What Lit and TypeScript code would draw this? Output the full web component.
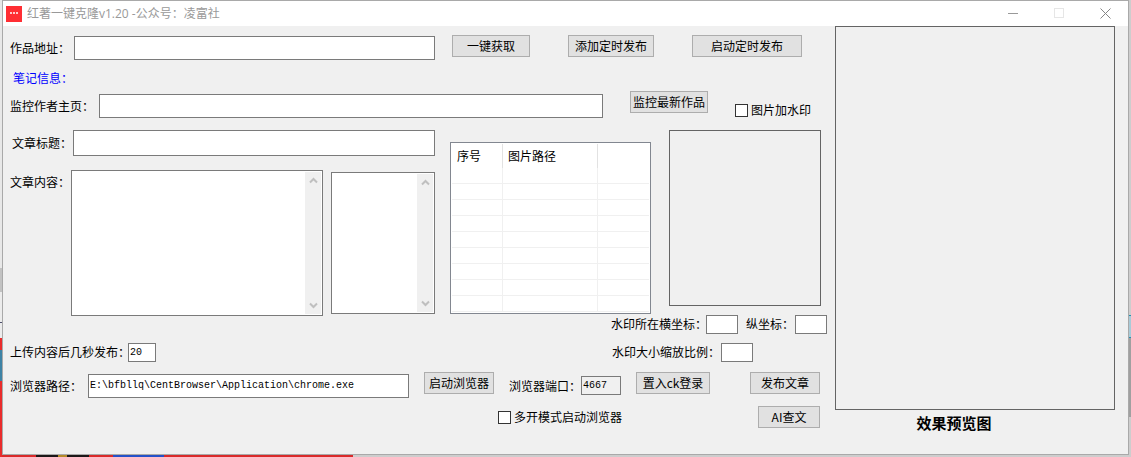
import { LitElement, html, css } from "lit";
import { customElement, property, state } from "lit/decorators.js";

@customElement("scroll-text")
class ScrollText extends LitElement {
  @property() label = "";

  static styles = css`
    :host { display: flex; box-sizing: border-box; border: 1px solid #7a7a7a; background: #fff; padding: 1px; min-width: 0; }
    textarea { flex: 1; min-width: 0; border: 0; margin: 0; padding: 2px; resize: none; outline: none; background: #fff;
      font: 12px "Liberation Mono", "Noto Sans CJK SC", monospace; overflow: hidden; }
    .track { width: 16px; flex: none; background: #f0f0f0; display: flex; flex-direction: column; justify-content: space-between; align-items: center; }
    button { border: 0; padding: 0; margin: 0; background: none; width: 16px; height: 17px; display: flex; align-items: center; justify-content: center; }
    path { fill: none; stroke: #bfbfbf; stroke-width: 2; }
  `;

  render() {
    return html`
      <textarea aria-label=${this.label}></textarea>
      <div class="track">
        <button aria-label="向上滚动"><svg width="9" height="7" viewBox="0 0 9 7"><path d="M1 5.5 4.5 2 8 5.5" /></svg></button>
        <button aria-label="向下滚动"><svg width="9" height="7" viewBox="0 0 9 7"><path d="M1 1.5 4.5 5 8 1.5" /></svg></button>
      </div>
    `;
  }
}

@customElement("app-root")
class AppRoot extends LitElement {
  @state() private rows = Array.from({ length: 9 }, () => ["", "", ""]);

  static styles = css`
    :host {
      display: block;
      box-sizing: border-box;
      min-height: 100vh;
      padding: 0 2px 2px;
      font: 12px/16px "Noto Sans CJK SC", sans-serif;
      color: #000;
      background:
        linear-gradient(#e8e8e8 0 268px, #c2c2c2 268px 292px, #ececec 292px 322px, #4d4f6b 322px 323px, #ececec 323px 338px, #e92c2c 338px 350px, #3e83a5 350px 381px, #e92c2c 381px) left top / 2px 100% no-repeat,
        linear-gradient(#cdcdcd 0 315px, #2b8fae 315px 316px, #a9cbd8 316px 337px, #2b8fae 337px 338px, #a0a0a0 338px 417px, #cdcdcd 417px) right top / 2px 100% no-repeat,
        linear-gradient(90deg, #d92a2a 0 36px, #1c1718 36px 58px, #b58a2a 58px 67px, #1c1718 67px 89px, #d92a2a 89px 113px, #2451c8 113px 164px, #d92a2a 164px 353px, #cdcdcd 353px) left bottom / 100% 2px no-repeat,
        #cdcdcd;
    }
    .window { border: 1px solid #a9a9a9; background: #f0f0f0; }

    .titlebar { display: flex; align-items: center; height: 25px; background: #fff; padding-left: 3px; color: #999; }
    .titlebar h1 { flex: 1; margin: 0 0 0 5px; font: 12px/16px "Open Sans", "Noto Sans CJK SC", sans-serif; white-space: nowrap; }
    .logo { flex: none; display: block; }
    .caption-btn { width: 46px; height: 25px; border: 0; padding: 0; background: none; display: flex; align-items: center; justify-content: center; }

    .body { display: flex; align-items: flex-start; }
    .form { flex: 1; min-width: 0; padding: 9px 8px 26px 7px; }
    .row { display: flex; align-items: center; }
    .fetch { height: 26px; padding-right: 25px; }
    .info { height: 26px; padding-top: 4px; }
    .watch { height: 30px; padding-right: 16px; }
    .launch { height: 27px; margin-top: 11px; padding-right: 7px; }
    .multi { height: 22px; margin-top: 7px; padding-right: 7px; }

    label { white-space: nowrap; flex: none; box-sizing: border-box; }
    .blue { color: #0000ff; margin-left: 3px; }
    .indent { padding-left: 2px; }
    .w63 { width: 63px; }
    .w64 { width: 64px; }
    .w61 { width: 61px; }
    .w89 { width: 89px; }
    .w78 { width: 78px; }
    .w72 { width: 72px; }
    .w118 { width: 118px; }
    .w109 { width: 109px; }
    .w95 { width: 95px; }
    .w49 { width: 49px; }

    input[type="text"] {
      box-sizing: border-box; min-width: 0; border: 1px solid #7a7a7a; background: #fff; border-radius: 0; margin: 0;
      padding: 0 1px; color: #000; outline: none;
      font: 10px/14px "Liberation Mono", "Noto Sans CJK SC", monospace;
    }
    input.long { flex: 1; height: 24px; }
    input.title { height: 26px; }
    input.small { flex: none; width: 32px; height: 19px; }
    input.seconds { width: 28px; }
    input.port { width: 40px; background: #f0f0f0; }

    .btn {
      flex: none; box-sizing: border-box; height: 22px; border: 1px solid #adadad; border-radius: 0; background: #e1e1e1;
      padding: 0; margin: 0; color: #000; white-space: nowrap;
      font: 12px/18px "Noto Sans CJK SC", sans-serif;
      align-self: flex-start;
    }
    .b62 { width: 62px; }
    .b70 { width: 70px; }
    .b74 { width: 74px; }
    .b78 { width: 78px; }
    .b86 { width: 86px; }
    .b110 { width: 110px; }
    .g8 { margin-left: 8px; }
    .g15 { margin-left: 15px; }
    .g17 { margin-left: 17px; }
    .g27 { margin-left: 27px; }
    .g38 { margin-left: 38px; }
    .g40 { margin-left: 40px; }

    .tick { display: flex; align-items: center; gap: 3px; height: 22px; }
    .tick input {
      appearance: none; box-sizing: border-box; width: 13px; height: 13px; margin: 0; border: 1px solid #333; background: #fff;
    }
    .tick input:checked { background: #333; box-shadow: inset 0 0 0 2px #fff; }
    .watch .tick { align-self: flex-end; }
    .multi { justify-content: flex-end; gap: 136px; }

    .main { display: flex; padding-top: 9px; gap: 15px; }
    .article { flex: 1; min-width: 0; }
    .content { display: flex; align-items: stretch; margin-top: 14px; height: 146px; }
    .content label { padding-top: 4px; }
    .text { flex: 1; }
    .tags { flex: none; width: 104px; margin: 2px 0 2px 8px; }
    .delay { margin-top: 27px; height: 18px; }

    .media { flex: none; width: 377px; }
    .lists { display: flex; gap: 18px; height: 184px; }
    .grid { box-sizing: border-box; width: 201px; margin-top: 12px; border: 1px solid #828790; background: #fff; padding: 1px; }
    table { width: 100%; border-collapse: separate; border-spacing: 0; table-layout: fixed; }
    th, td { box-sizing: border-box; padding: 0 0 0 5px; border-right: 1px solid #f0f0f0; font-weight: 400; text-align: left; white-space: nowrap; }
    th { height: 24px; border-right-color: #e2e2e2; }
    td { height: 16px; border-bottom: 1px solid #f0f0f0; line-height: 12px; }
    th:last-child, td:last-child { border-right: 0; }
    .c1 { width: 51px; }
    .c2 { width: 95px; }
    .picture { box-sizing: border-box; width: 152px; height: 176px; border: 1px solid #646464; }
    .coords { height: 20px; padding-left: 161px; }
    .scale { height: 18px; margin-top: 9px; padding-left: 162px; }

    .preview { flex: none; width: 280px; margin: 0 13px 0 0; }
    .frame { box-sizing: border-box; height: 384px; border: 1px solid #646464; }
    figcaption { padding: 4px 42px 0 0; text-align: center; font-size: 15px; line-height: 18px; font-weight: 700; }
  `;

  render() {
    return html`
      <main class="window">
        <header class="titlebar">
          <svg class="logo" width="16" height="16" viewBox="0 0 16 16">
            <rect width="16" height="16" fill="#ff2e33" />
            <path d="M4 7h2M7 7h2M10 7h2" stroke="#fff" stroke-width="2" stroke-opacity=".75" />
          </svg>
          <h1>红著一键克隆v1.20 -公众号：凌富社</h1>
          <button class="caption-btn" aria-label="最小化">
            <svg width="11" height="11" viewBox="0 0 11 11"><path d="M0 5.5h10" stroke="#999" /></svg>
          </button>
          <button class="caption-btn" aria-label="最大化" disabled>
            <svg width="11" height="11" viewBox="0 0 11 11"><rect x=".5" y=".5" width="9" height="9" fill="none" stroke="#e6e6e6" /></svg>
          </button>
          <button class="caption-btn" aria-label="关闭">
            <svg width="11" height="11" viewBox="0 0 11 11"><path d="M.5.5l10 10M10.5.5l-10 10" stroke="#858585" /></svg>
          </button>
        </header>

        <div class="body">
          <section class="form">
            <div class="row fetch">
              <label class="w64" for="url">作品地址：</label>
              <input id="url" class="long" type="text" />
              <button class="btn b78 g17">一键获取</button>
              <button class="btn b86 g38">添加定时发布</button>
              <button class="btn b110 g38">启动定时发布</button>
            </div>
            <div class="row info"><span class="blue">笔记信息：</span></div>
            <div class="row watch">
              <label class="w89" for="author">监控作者主页：</label>
              <input id="author" class="long" type="text" />
              <button class="btn b78 g27">监控最新作品</button>
              <label class="tick g27"><input type="checkbox" />图片加水印</label>
            </div>

            <div class="main">
              <div class="article">
                <div class="row">
                  <label class="w63 indent" for="title">文章标题：</label>
                  <input id="title" class="long title" type="text" />
                </div>
                <div class="content">
                  <label class="w61">文章内容：</label>
                  <scroll-text class="text" label="文章内容"></scroll-text>
                  <scroll-text class="tags" label="文章标签"></scroll-text>
                </div>
                <div class="row delay">
                  <label class="w118" for="delay">上传内容后几秒发布：</label>
                  <input id="delay" class="small seconds" type="text" value="20" />
                </div>
              </div>

              <div class="media">
                <div class="lists">
                  <div class="grid">
                    <table>
                      <thead><tr><th class="c1">序号</th><th class="c2">图片路径</th><th></th></tr></thead>
                      <tbody>
                        ${this.rows.map((r) => html`<tr>${r.map((c) => html`<td>${c}</td>`)}</tr>`)}
                      </tbody>
                    </table>
                  </div>
                  <div class="picture"></div>
                </div>
                <div class="row coords">
                  <label class="w95" for="x">水印所在横坐标：</label>
                  <input id="x" class="small" type="text" />
                  <label class="w49 g8" for="y">纵坐标：</label>
                  <input id="y" class="small" type="text" />
                </div>
                <div class="row scale">
                  <label class="w109" for="scale">水印大小缩放比例：</label>
                  <input id="scale" class="small" type="text" />
                </div>
              </div>
            </div>

            <div class="row launch">
              <label class="w78" for="path">浏览器路径：</label>
              <input id="path" class="long" type="text" value="E:\\bfbllq\\CentBrowser\\Application\\chrome.exe" />
              <button class="btn b70 g15">启动浏览器</button>
              <label class="w72 g15" for="port">浏览器端口：</label>
              <input id="port" class="small port" type="text" value="4667" readonly />
              <button class="btn b74 g15">置入ck登录</button>
              <button class="btn b70 g40">发布文章</button>
            </div>
            <div class="row multi">
              <label class="tick"><input type="checkbox" />多开模式启动浏览器</label>
              <button class="btn b62">AI查文</button>
            </div>
          </section>

          <figure class="preview">
            <div class="frame"></div>
            <figcaption>效果预览图</figcaption>
          </figure>
        </div>
      </main>
    `;
  }
}
